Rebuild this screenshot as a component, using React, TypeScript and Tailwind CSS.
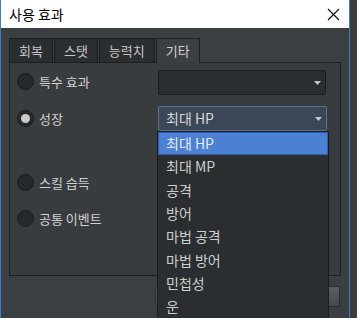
import React from 'react';

const font = { fontFamily: '"Noto Sans CJK KR", "Noto Sans", sans-serif' };

function Radio({ label, checked = false }: { label: string; checked?: boolean }) {
  return (
    <div className="flex items-center h-[24px] pl-[7px]">
      <span className="w-[17px] h-[17px] rounded-full bg-[#26292b] border border-[#1b1d1e] flex items-center justify-center">
        {checked && <span className="w-[9px] h-[9px] rounded-full bg-[#c9cacb]" />}
      </span>
      <span className="ml-[5px] text-[13px] text-[#cfd0d1] leading-none">{label}</span>
    </div>
  );
}

function Arrow() {
  return (
    <svg width="7" height="4" viewBox="0 0 7 4" className="mr-[4px]">
      <path d="M0 0 L7 0 L3.5 4 Z" fill="#c4c6c8" />
    </svg>
  );
}

export default function App() {
  const tabs = ['회복', '스탯', '능력치'];
  const items = ['최대 HP', '최대 MP', '공격', '방어', '마법 공격', '마법 방어', '민첩성', '운'];

  return (
    <div className="w-[357px] h-[318px] bg-[#3a3c3e] overflow-hidden" style={font}>
      <div className="w-[350px] h-full flex flex-col border-l border-r border-[#3b7fc6] bg-[#3c3f42]">
        <div className="h-[28px] bg-white flex items-center justify-between pl-[8px] pr-[9px] shrink-0">
          <span className="text-[14px] text-black">사용 효과</span>
          <svg width="13" height="13" viewBox="0 0 13 13">
            <path d="M1 1 L12 12 M12 1 L1 12" stroke="#111" strokeWidth="1.2" />
          </svg>
        </div>

        <div className="pl-[8px] pt-[9px] flex flex-col">
          <div className="flex items-end h-[25px]">
            {tabs.map((t) => (
              <div
                key={t}
                className="h-[24px] mr-[1px] px-[9px] flex items-center bg-[#2b2e30] border border-[#1c1e1f] border-b-0 text-[13px] text-[#c3c5c7]"
              >
                {t}
              </div>
            ))}
            <div className="h-[25px] w-[44px] justify-center flex items-center bg-[#3c3f42] border border-[#1c1e1f] border-b-0 text-[13px] text-[#d0d1d2] relative z-10 -mb-[1px]">
              기타
            </div>
          </div>

          <div className="w-[332px] h-[214px] border border-[#1c1e1f] bg-[#393c3f] relative pt-[7px]">
            <div className="flex items-center">
              <div className="w-[148px] -mt-[2px]">
                <Radio label="특수 효과" />
              </div>
              <div className="w-[168px] h-[25px] rounded-[2px] bg-[#2b2e30] border border-[#1a1c1d] flex items-center justify-end">
                <Arrow />
              </div>
            </div>

            <div className="flex items-center mt-[11px]">
              <div className="w-[148px]">
                <Radio label="성장" checked />
              </div>
              <div className="w-[169px] h-[25px] rounded-[2px] bg-[#3b4757] border border-[#5a718e] flex items-center justify-between pl-[7px] relative">
                <span className="text-[14px] text-[#d8d9da]">최대 HP</span>
                <Arrow />
                <div className="absolute left-[-2px] top-[24px] w-[172px] bg-[#2b2e30] border border-[#1a1c1d] z-20 flex flex-col">
                  {items.map((it, i) => (
                    <div
                      key={it}
                      className={
                        i === 0
                          ? 'h-[23.3px] flex items-center pl-[7px] text-[14px] bg-[#4b80d3] border border-[#2e5ea8] text-[#e6eaf2]'
                          : 'h-[23.3px] flex items-center pl-[8px] text-[14px] text-[#cdcecf]'
                      }
                    >
                      {it}
                    </div>
                  ))}
                </div>
              </div>
            </div>

            <div className="mt-[39px]">
              <Radio label="스킬 습득" />
            </div>
            <div className="mt-[12px]">
              <Radio label="공통 이벤트" />
            </div>
          </div>

          <div className="flex justify-end gap-[5px] pr-[9px] mt-[10px]">
            <div className="w-[90px] h-[21px] rounded-[2px] bg-gradient-to-b from-[#5d6063] to-[#46494c] border border-[#2a2c2e]" />
            <div className="w-[90px] h-[21px] rounded-[2px] bg-gradient-to-b from-[#5d6063] to-[#46494c] border border-[#2a2c2e]" />
          </div>
        </div>
      </div>
    </div>
  );
}
